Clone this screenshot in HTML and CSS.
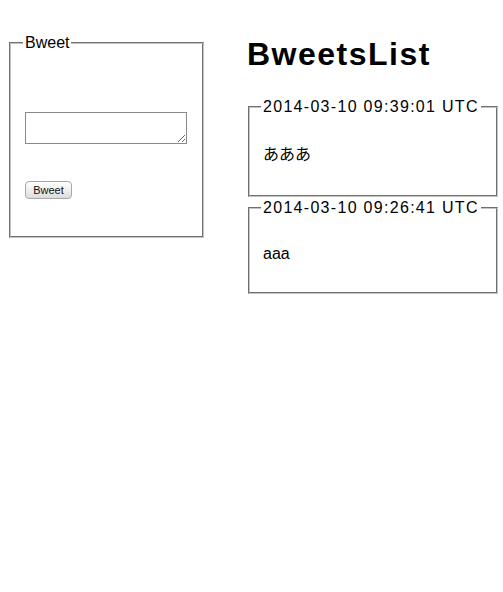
FILE: index.html
```html
<!DOCTYPE html>
<html lang="ja">
<head>
<meta charset="utf-8">
<title>Bweets</title>
<link rel="stylesheet" href="styles.css">
</head>
<body>
<div class="page">
  <div class="left">
    <form class="bweet-form">
      <fieldset class="box box-form">
        <legend class="legend">Bweet</legend>
        <textarea class="input" rows="2"></textarea>
        <div class="actions"><button type="button" class="btn">Bweet</button></div>
      </fieldset>
    </form>
  </div>
  <div class="right">
    <h1 class="title">BweetsList</h1>
    <fieldset class="box box-item">
      <legend class="legend date">2014-03-10 09:39:01 UTC</legend>
      <p class="body body-cjk">あああ</p>
    </fieldset>
    <fieldset class="box box-item">
      <legend class="legend date">2014-03-10 09:26:41 UTC</legend>
      <p class="body">aaa</p>
    </fieldset>
  </div>
</div>
</body>
</html>
```

FILE: styles.css
```css
html, body {
  margin: 0;
  padding: 0;
  background: #fff;
}
body {
  font-family: "Liberation Sans", Arial, "Noto Sans CJK JP", sans-serif;
  color: #000;
}
.page {
  display: flex;
  align-items: flex-start;
  padding: 34px 0 0 9px;
}
.left {
  width: 195px;
  flex: none;
}
.bweet-form {
  margin: 0;
}
.box {
  margin: 0;
  border: 2px groove #c4c4c4;
  min-width: 0;
}
.box-form {
  width: 195px;
  height: 204px;
  box-sizing: border-box;
  padding: 0 14px;
}
.legend {
  padding: 0 2px;
  margin-left: -2px;
  font-size: 16px;
  line-height: 18px;
  white-space: nowrap;
}
.date {
  letter-spacing: 1.3px;
}
.input {
  display: block;
  margin: 60px 0 0 0;
  width: 162px;
  height: 32px;
  box-sizing: border-box;
  border: 1px solid #8a8a8a;
  padding: 2px;
  font: 13px "Liberation Sans", Arial, sans-serif;
}
.actions {
  margin-top: 37px;
}
.btn {
  display: block;
  width: 47px;
  height: 18px;
  padding: 0;
  border: 1px solid #a8a8a8;
  border-radius: 4px;
  background: linear-gradient(#ffffff, #ececec 60%, #dcdcdc);
  font: 11px "Liberation Sans", Arial, sans-serif;
  color: #111;
  line-height: 16px;
}
.right {
  margin-left: 44px;
  width: 250px;
  flex: none;
}
.title {
  margin: 2px 0 25px -1px;
  font-size: 32px;
  line-height: 37px;
  font-weight: bold;
  letter-spacing: 1.5px;
}
.box-item {
  width: 250px;
  box-sizing: border-box;
  padding: 0 13px;
  margin-bottom: 2px;
}
.body {
  margin: 28px 0 0 0;
  padding-bottom: 29px;
  font-size: 16px;
  line-height: 18px;
}
.body-cjk {
  margin-top: 30px;
  padding-bottom: 31px;
}
```
